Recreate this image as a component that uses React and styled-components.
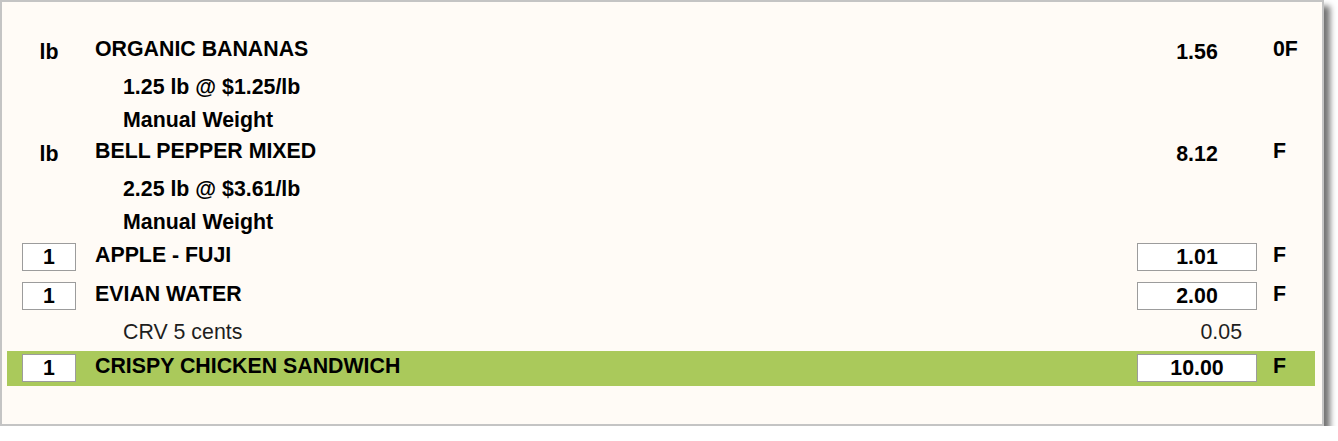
import React from "react";
import styled, { createGlobalStyle } from "styled-components";

const GlobalStyle = createGlobalStyle`
  html, body {
    margin: 0;
    padding: 0;
    background: #ffffff;
  }
  body {
    font-family: "Liberation Sans", Arial, sans-serif;
    font-size: 16pt;
    color: #000000;
  }
`;

const StyledPanel = styled.div`
  box-sizing: border-box;
  width: 1324px;
  height: 426px;
  padding-top: 34px;
  background-color: #fffbf6;
  border: 2px solid #c4c4c4;
  box-shadow: 6px 6px 6px rgba(0, 0, 0, 0.55);
`;

const StyledList = styled.div`
  display: flex;
  flex-direction: column;
  margin: 0 7px 0 5px;
`;

const StyledItemRow = styled.div`
  display: flex;
  align-items: flex-start;
  box-sizing: border-box;
  height: ${(p) => (p.$weighed ? "37px" : "35px")};
  margin-bottom: ${(p) => (p.$weighed ? "0" : "4px")};
  padding-left: 15px;
  background-color: ${(p) => (p.$selected ? "#aac95b" : "transparent")};
  line-height: 24px;
  font-weight: bold;
`;

const StyledQtyBox = styled.div`
  box-sizing: border-box;
  width: 54px;
  height: 28px;
  margin-top: 3px;
  background: #ffffff;
  border: 1px solid #9c9c9c;
  text-align: center;
  line-height: 27px;
`;

const StyledUnit = styled.div`
  width: 54px;
  margin-top: 4px;
  text-align: center;
`;

const StyledName = styled.div`
  flex: 1;
  margin-left: 19px;
  margin-top: ${(p) => (p.$weighed ? "1px" : "3px")};
  white-space: nowrap;
`;

const StyledPriceBox = styled.div`
  box-sizing: border-box;
  width: 120px;
  height: 28px;
  margin-top: 3px;
  background: #ffffff;
  border: 1px solid #9c9c9c;
  text-align: center;
  line-height: 27px;
`;

const StyledPriceText = styled.div`
  width: 120px;
  margin-top: 4px;
  text-align: center;
`;

const StyledFlag = styled.div`
  width: 42px;
  margin-left: 16px;
  margin-top: ${(p) => (p.$weighed ? "1px" : "3px")};
`;

const StyledSubRow = styled.div`
  display: flex;
  align-items: flex-start;
  box-sizing: border-box;
  height: 32.5px;
  padding-top: 2px;
  padding-left: 116px;
  line-height: 24px;
`;

const StyledSubText = styled.div`
  flex: 1;
  font-weight: ${(p) => (p.$bold ? "bold" : "normal")};
  color: ${(p) => (p.$bold ? "#000000" : "#1e1e1e")};
`;

const StyledSubAmount = styled.div`
  width: 120px;
  margin-right: 58px;
  padding-right: 15px;
  box-sizing: border-box;
  text-align: right;
  color: #1e1e1e;
`;

const items = [
  {
    unit: "lb",
    name: "ORGANIC BANANAS",
    price: "1.56",
    flag: "0F",
    subs: [{ text: "1.25 lb @ $1.25/lb", bold: true }, { text: "Manual Weight", bold: true }],
  },
  {
    unit: "lb",
    name: "BELL PEPPER MIXED",
    price: "8.12",
    flag: "F",
    subs: [{ text: "2.25 lb @ $3.61/lb", bold: true }, { text: "Manual Weight", bold: true }],
  },
  { qty: 1, name: "APPLE - FUJI", price: "1.01", flag: "F", subs: [] },
  {
    qty: 1,
    name: "EVIAN WATER",
    price: "2.00",
    flag: "F",
    subs: [{ text: "CRV 5 cents", amount: "0.05" }],
  },
  { qty: 1, name: "CRISPY CHICKEN SANDWICH", price: "10.00", flag: "F", subs: [], selected: true },
];

const Item = ({ item }) => {
  const weighed = !!item.unit;

  return (
    <>
      <StyledItemRow $weighed={weighed} $selected={item.selected}>
        {weighed ? <StyledUnit>{item.unit}</StyledUnit> : <StyledQtyBox>{item.qty}</StyledQtyBox>}
        <StyledName $weighed={weighed}>{item.name}</StyledName>
        {weighed ? (
          <StyledPriceText>{item.price}</StyledPriceText>
        ) : (
          <StyledPriceBox>{item.price}</StyledPriceBox>
        )}
        <StyledFlag $weighed={weighed}>{item.flag}</StyledFlag>
      </StyledItemRow>

      {item.subs.map((sub, i) => (
        <StyledSubRow key={i}>
          <StyledSubText $bold={sub.bold}>{sub.text}</StyledSubText>
          {sub.amount && <StyledSubAmount>{sub.amount}</StyledSubAmount>}
        </StyledSubRow>
      ))}
    </>
  );
};

const App = () => {
  return (
    <>
      <GlobalStyle />
      <StyledPanel>
        <StyledList>
          {items.map((item) => (
            <Item key={item.name} item={item} />
          ))}
        </StyledList>
      </StyledPanel>
    </>
  );
};

export default App;
